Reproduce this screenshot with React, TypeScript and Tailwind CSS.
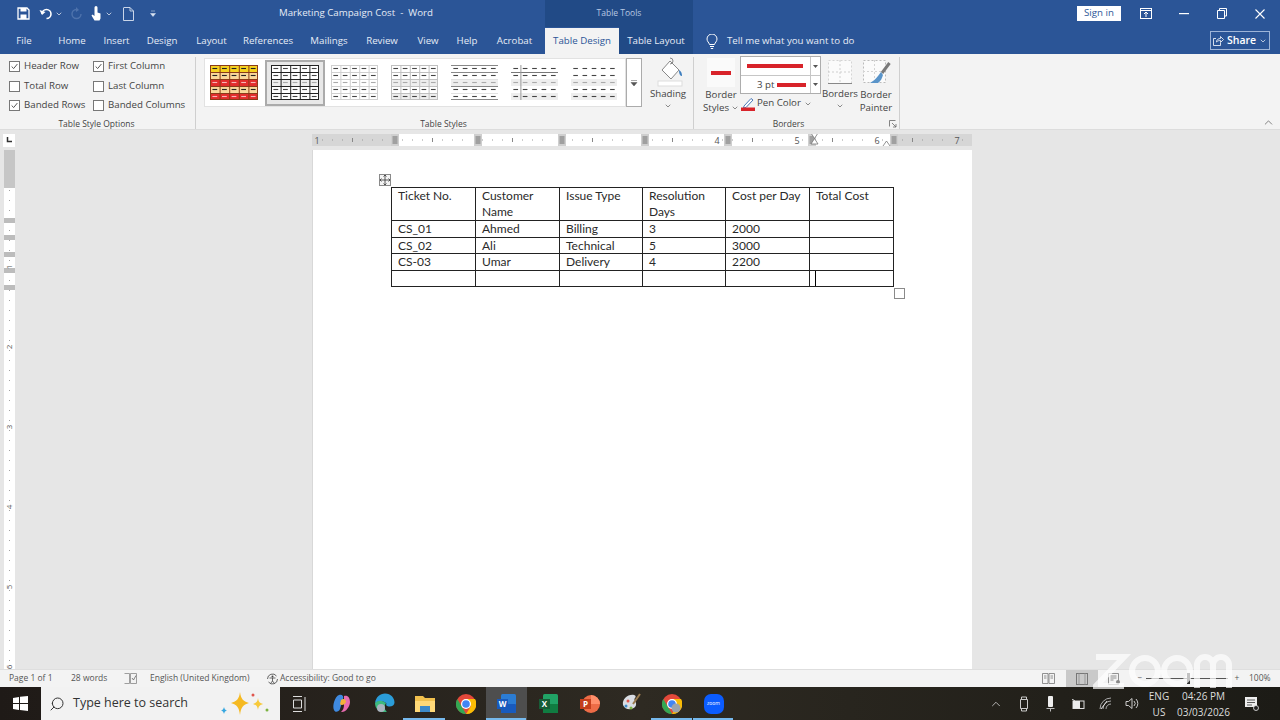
import React from "react";
import { ChevronDown, ChevronUp, Search } from "lucide-react";

const Chev = ({ c = "text-[#555]" }: { c?: string }) => <ChevronDown className={`w-[8px] h-[8px] ${c}`} strokeWidth={2} />;

const tabs: [string, string][] = [
  ["File", "w-[48px]"], ["Home", "w-[48px]"], ["Insert", "w-[41px]"], ["Design", "w-[50px]"], ["Layout", "w-[49px]"],
  ["References", "w-[64px]"], ["Mailings", "w-[58px]"], ["Review", "w-[48px]"], ["View", "w-[44px]"], ["Help", "w-[34px]"], ["Acrobat", "w-[61px]"],
];

function Check({ label, on, w }: { label: string; on?: boolean; w: string }) {
  return (
    <div className={`flex items-center gap-[4px] h-[19.5px] ${w}`}>
      <span className="w-[11px] h-[11px] border border-[#777] bg-white flex items-center justify-center shrink-0">
        {on && (
          <svg viewBox="0 0 11 11" className="w-[9px] h-[9px]"><path d="M2 5.5 L4.5 8 L9 2.5" fill="none" stroke="#444" strokeWidth="1.1" /></svg>
        )}
      </span>
      <span className="whitespace-nowrap">{label}</span>
    </div>
  );
}

function Thumb({ kind, w }: { kind: "color" | "grid" | "light" | "mid" | "lines" | "firstcol" | "plain"; w: number }) {
  const rows = [0, 1, 2, 3, 4];
  const cols = [0, 1, 2, 3, 4];
  const h = 35;
  const cw = w / 5;
  const ch = h / 5;
  const stroke = kind === "grid" ? "#222" : kind === "light" ? "#d0d0d0" : kind === "mid" ? "#c0c0c0" : "#999";
  const dash = kind === "color" ? "#222" : "#444";
  return (
    <svg width={w} height={h} viewBox={`0 0 ${w} ${h}`} className="shrink-0 block">
      <rect x="0" y="0" width={w} height={h} fill="#fff" />
      {kind === "color" && rows.map((r) => (
        <rect key={r} x="0" y={r * ch} width={w} height={ch} fill={["#f6d21f", "#f9d79a", "#e22d2d", "#f9d79a", "#e22d2d"][r]} />
      ))}
      {(kind === "grid" || kind === "mid" || kind === "plain" || kind === "lines" || kind === "firstcol") && <rect x="0" y={ch * 2} width={w} height={ch} fill="#eeeeee" />}
      {(kind === "mid" || kind === "plain" || kind === "firstcol") && <rect x="0" y={ch * 4} width={w} height={ch} fill="#eeeeee" />}
      {(kind === "color" || kind === "grid" || kind === "light" || kind === "mid") && (
        <>
          {rows.concat(5).map((r) => <line key={r} x1="0" x2={w} y1={r * ch + (r === 5 ? -0.5 : 0.5)} y2={r * ch + (r === 5 ? -0.5 : 0.5)} stroke={kind === "color" ? "#8a3b1a" : stroke} strokeWidth="1" />)}
          {cols.concat(5).map((c) => <line key={c} y1="0" y2={h} x1={c * cw + (c === 5 ? -0.5 : 0.5)} x2={c * cw + (c === 5 ? -0.5 : 0.5)} stroke={kind === "color" ? "#8a3b1a" : stroke} strokeWidth="1" />)}
        </>
      )}
      {kind === "lines" && [0.5, 7.5, 21.5, 34.5, 14.5, 28.5].map((y, i) => <line key={i} x1="0" x2={w} y1={y} y2={y} stroke={i < 4 ? "#888" : "#e2e2e2"} />)}
      {kind === "firstcol" && (
        <>
          <line x1="0" x2={w} y1="7.5" y2="7.5" stroke="#777" />
          <line x1={cw + 0.5} x2={cw + 0.5} y1="0" y2={h} stroke="#999" />
        </>
      )}
      {rows.map((r) => cols.map((c) => (
        <line key={`${r}-${c}`} x1={c * cw + cw * 0.25} x2={c * cw + cw * 0.75} y1={r * ch + ch / 2} y2={r * ch + ch / 2}
          stroke={kind === "color" ? (r === 2 || r === 4 ? "#f7b5b5" : dash) : r === 2 ? "#aaa" : dash} strokeWidth="1.1" />
      )))}
    </svg>
  );
}

function HRuler() {
  const w = 660;
  const ticks: React.ReactNode[] = [];
  for (let x = 0; x <= 660; x += 10) {
    const inch = (x - 80) % 80 === 0;
    const mid = (x - 80 + 40) % 80 === 0;
    if (inch) continue;
    ticks.push(mid
      ? <line key={x} x1={x + 0.5} x2={x + 0.5} y1="4" y2="8" stroke="#888" />
      : <rect key={x} x={x} y="5.5" width="1" height="1" fill="#999" />);
  }
  return (
    <svg width={w} height="12" viewBox="0 0 660 12" className="block">
      <rect x="0" y="0" width="660" height="12" fill="#d6d6d6" />
      <rect x="80" y="0" width="500" height="12" fill="#fff" />
      {ticks}
      {[79, 162, 246, 329, 412, 496, 578].map((x) => (
        <g key={x}>
          <rect x={x} y="0" width="8" height="12" fill="#cfcfcf" />
          <rect x={x + 1.5} y="2" width="5" height="8" fill="#a0a0a0" />
        </g>
      ))}
      {[["1", 5], ["4", 405], ["5", 485], ["6", 565], ["7", 645]].map(([t, x]) => (
        <text key={t as string} x={x as number} y="9.5" fontSize="9" fontFamily="Open Sans, sans-serif" fill="#555" textAnchor="middle">{t}</text>
      ))}
      <path d="M499 -1 h7 l-3.5 5.5 l3.5 5.5 h-7 l3.5 -5.5 z" fill="#fff" stroke="#777" strokeWidth=".8" />
      <path d="M571 12 l3.5 -5 l3.5 5 v2 h-7 z" fill="#fff" stroke="#777" strokeWidth=".8" />
    </svg>
  );
}

function VRuler() {
  const marks: React.ReactNode[] = [];
  for (let y = 0; y < 520; y += 10) {
    const rel = y - 38;
    if (rel < 0 && y > 36) continue;
    marks.push(rel % 40 === 0 && rel % 80 !== 0
      ? <line key={y} x1="3.5" x2="8" y1={y + 0.5} y2={y + 0.5} stroke="#888" />
      : <rect key={y} x="5.5" y={y} width="1" height="1" fill="#999" />);
  }
  return (
    <svg width="11" height="519" viewBox="0 0 12 519" preserveAspectRatio="none" className="block ml-[4px]">
      <rect width="12" height="519" fill="#fff" />
      {marks}
      <rect width="12" height="38" fill="#c6c6c6" />
      {[68, 85, 102, 118, 135].map((y) => <rect key={y} x="0" y={y} width="12" height="5" fill="#bcbcbc" />)}
      {[["1", 117], ["2", 197], ["3", 277], ["4", 357], ["5", 437], ["6", 517]].map(([t, y]) => (
        <text key={t as string} x="6" y={y as number} fontSize="8" fontFamily="Open Sans, sans-serif" fill="#555" textAnchor="middle" transform={`rotate(-90 6 ${y})`} dy="3">{t}</text>
      ))}
    </svg>
  );
}

const rowsData = [
  ["CS_01", "Ahmed", "Billing", "3", "2000", ""],
  ["CS_02", "Ali", "Technical", "5", "3000", ""],
  ["CS-03", "Umar", "Delivery", "4", "2200", ""],
];
const th = "border border-[#222] align-top pl-[6px] pt-0 leading-[16px] font-normal text-left";
const td = "border border-[#222] align-top pl-[6px] p-0 h-[16.6px] leading-[15.6px] font-normal text-left";

function TaskIcon({ children, w = "w-[41px]", active, under }: { children: React.ReactNode; w?: string; active?: boolean; under?: boolean }) {
  return (
    <div className={`relative h-full flex items-center justify-center ${w} ${active ? "bg-[#4e4e4e]" : ""}`}>
      {children}
      {under && <span className="absolute bottom-0 left-0 right-[1px] h-[2px] bg-[#76b9ed]" />}
    </div>
  );
}

const GroupLabel = ({ t, c = "" }: { t: string; c?: string }) => (
  <div className={`mt-auto h-[13px] leading-[15px] text-center text-[8.5px] ${c}`}>{t}</div>
);

export default function App() {
  return (
    <div className="relative w-[1280px] h-[720px] overflow-hidden flex flex-col bg-[#e6e6e6] text-[9.7px] text-[#444]" style={{ fontFamily: '"Open Sans", "Noto Sans", sans-serif' }}>
      {/* Title bar */}
      <div className="h-[27px] bg-[#2b5597] flex items-center text-white shrink-0">
        <div className="w-[545px] flex items-center h-full">
          <div className="flex items-center ml-[17px]">
            <svg width="13" height="13" viewBox="0 0 13 13"><path d="M1 1h9l2 2v9H1z" fill="none" stroke="#fff" strokeWidth="1.3" /><rect x="3.5" y="1" width="6" height="3.5" fill="#fff" /><rect x="3.5" y="7.5" width="6" height="4.5" fill="#fff" /></svg>
            <svg width="14" height="13" viewBox="0 0 14 13" className="ml-[9px]"><path d="M3 7 A4.5 4.5 0 1 1 7.5 11.5" fill="none" stroke="#fff" strokeWidth="1.6" /><path d="M0.5 3 L3 8 L6.5 5" fill="#fff" /></svg>
            <span className="ml-[2px]"><Chev c="text-white" /></span>
            <svg width="12" height="13" viewBox="0 0 12 13" className="ml-[8px] opacity-30"><path d="M10 7 A4.5 4.5 0 1 1 5.5 2.5" fill="none" stroke="#9fb7dd" strokeWidth="1.4" /><path d="M5 0 L8 3 L5 5 z" fill="#9fb7dd" /></svg>
            <svg width="12" height="16" viewBox="0 0 12 16" className="ml-[7px]"><path d="M4.5 1.5 a1.5 1.5 0 0 1 3 0 v5 l3 1 v5 l-1 2 h-5 l-3 -5 1 -1 2 1.5 z" fill="#fff" /></svg>
            <span className="ml-[3px]"><Chev c="text-white" /></span>
            <svg width="11" height="14" viewBox="0 0 11 14" className="ml-[10px]"><path d="M1 .5h6l3.5 3.5v9.500H.5V.5" fill="none" stroke="#dbe4f2" strokeWidth=".9" /><path d="M7 .5v3.500h3.500" fill="none" stroke="#dbe4f2" strokeWidth=".8" /></svg>
            <svg width="6" height="7" viewBox="0 0 6 7" className="ml-[16px]"><path d="M1 1h4M.5 3.500h5L3 6.500z" fill="#dbe4f2" stroke="#dbe4f2" strokeWidth=".5" /></svg>
          </div>
          <span className="ml-[123px] text-[#e6ecf6] whitespace-nowrap">Marketing Campaign Cost&nbsp; -&nbsp; Word</span>
        </div>
        <div className="w-[148px] h-full bg-[#214a86] flex items-center justify-center text-[8.5px] text-[#b8c8e2]">Table Tools</div>
        <div className="ml-[384px] w-[44px] h-[15px] bg-white text-[#2b5597] flex items-center justify-center">Sign in</div>
        <svg width="12" height="11" viewBox="0 0 12 11" className="ml-[19px]"><rect x=".5" y=".5" width="11" height="10" fill="none" stroke="#fff" /><path d="M.5 2.500h11M6 9V4.500M4 6l2-2 2 2" fill="none" stroke="#fff" /></svg>
        <svg width="10" height="2" viewBox="0 0 10 2" className="ml-[27px]"><rect width="10" height="1.200" fill="#fff" /></svg>
        <svg width="10" height="11" viewBox="0 0 10 11" className="ml-[28px]"><path d="M2.500 2V.5h7v7.500H8M.5 2.500h7v8h-7z" fill="none" stroke="#fff" /></svg>
        <svg width="10" height="10" viewBox="0 0 10 10" className="ml-[28px]"><path d="M.5 .5l9 9M9.500 .5l-9 9" stroke="#fff" strokeWidth="1.100" /></svg>
      </div>

      {/* Tabs */}
      <div className="h-[27px] bg-[#2b5597] flex items-stretch text-[#e6ecf6] shrink-0">
        {tabs.map(([t, w]) => (
          <div key={t} className={`${w} flex items-center justify-center whitespace-nowrap pt-[1px]`}>{t}</div>
        ))}
        <div className="w-[74px] bg-[#f3f3f3] text-[#2b5597] flex items-center justify-center mt-[1px] whitespace-nowrap">Table Design</div>
        <div className="w-[74px] bg-[#214a86] flex items-center justify-center whitespace-nowrap pt-[1px]">Table Layout</div>
        <div className="w-[517px] flex items-center pl-[13px] pt-[1px]">
          <svg width="12" height="15" viewBox="0 0 12 15"><path d="M3.500 10.500C3 8.500 1 7.500 1 5a5 5 0 0 1 10 0c0 2.500-2 3.500-2.500 5.500zM4 12.500h4M4.800 14.500h2.400" fill="none" stroke="#fff" strokeWidth="1" /></svg>
          <span className="ml-[9px] whitespace-nowrap">Tell me what you want to do</span>
        </div>
        <div className="mt-[4px] h-[19px] w-[60px] border border-[#9db4d8] flex items-center justify-center gap-[3px] text-white">
          <svg width="11" height="11" viewBox="0 0 11 11"><path d="M3 3.500H.5v7h7V8M3.500 7c0-2.500 2-3.500 4-3.500V1.500l3 3-3 3v-2c-1.500 0-3 .3-4 1.500z" fill="none" stroke="#fff" strokeWidth=".8" /></svg>
          <span className="font-semibold text-[10.5px]">Share</span>
          <Chev c="text-white" />
        </div>
      </div>

      {/* Ribbon */}
      <div className="h-[76px] bg-[#f3f3f3] border-b border-[#dcdcdc] flex items-start shrink-0 relative">
        {/* Table Style Options */}
        <div className="w-[196px] h-[72px] mt-[3px] border-r border-[#cfcfcf] flex flex-col">
          <div className="flex pl-[9px]">
            <div className="flex flex-col w-[84px]">
              <Check label="Header Row" on w="w-[84px]" />
              <Check label="Total Row" w="w-[84px]" />
              <Check label="Banded Rows" on w="w-[84px]" />
            </div>
            <div className="flex flex-col">
              <Check label="First Column" on w="w-[95px]" />
              <Check label="Last Column" w="w-[95px]" />
              <Check label="Banded Columns" w="w-[95px]" />
            </div>
          </div>
          <GroupLabel t="Table Style Options" c="pr-[2px]" />
        </div>
        {/* Table styles */}
        <div className="w-[498px] h-[72px] mt-[3px] border-r border-[#cfcfcf] flex flex-col relative">
          <div className="flex items-stretch ml-[8px] mt-[1px] h-[49px]">
            <div className="w-[422px] bg-white border border-[#e2e2e2] flex items-center relative">
              <span className="ml-[5px]"><Thumb kind="color" w={48} /></span>
              <span className="ml-[7px] w-[60px] h-[46px] border-2 border-[#ababab] bg-[#e8e8e8] flex items-center justify-center">
                <Thumb kind="grid" w={48} />
              </span>
              <span className="ml-[6px]"><Thumb kind="light" w={47} /></span>
              <span className="ml-[13px]"><Thumb kind="mid" w={47} /></span>
              <span className="ml-[13px]"><Thumb kind="lines" w={47} /></span>
              <span className="ml-[13px]"><Thumb kind="firstcol" w={47} /></span>
              <span className="ml-[13px]"><Thumb kind="plain" w={46} /></span>
            </div>
            <div className="w-[16px] bg-white border border-[#ababab] flex items-center justify-center">
              <svg width="8" height="8" viewBox="0 0 8 8"><path d="M1 1.500h6M1 3.500h6L4 7z" fill="#555" stroke="#555" strokeWidth=".5" /></svg>
            </div>
          </div>
          <div className="absolute left-[454px] top-0 w-[36px] flex flex-col items-center">
            <svg width="30" height="30" viewBox="0 0 30 30">
              <path d="M9 13 L17 4 L26 13 L18 22 z" fill="#fff" stroke="#888" />
              <path d="M17 1 a2 2 0 0 1 0 6" fill="none" stroke="#888" />
              <path d="M26 13 c2 1 3 3 3 6 c-2 0 -3 -2 -3 -6" fill="#3f7fbf" />
              <rect x="5" y="24" width="24" height="5" fill="#fff" stroke="#ddd" />
            </svg>
            <div className="text-center leading-[12px] mt-[1px]">Shading</div>
            <div className="flex justify-center mt-[2px]"><Chev /></div>
          </div>
          <GroupLabel t="Table Styles" c="pr-[2px]" />
        </div>
        {/* Borders */}
        <div className="w-[206px] h-[72px] mt-[3px] border-r border-[#cfcfcf] flex flex-col relative">
          <div className="flex h-[59px]">
            <div className="ml-[12px] w-[30px] flex flex-col items-center">
              <div className="w-[28px] h-[29px] mt-[1px] bg-[#fafafa] flex items-center justify-center">
                <span className="w-[20px] h-[4px] bg-[#d8232a]" />
              </div>
              <div className="mt-[1px] leading-[13px] text-center whitespace-nowrap">Border<br /><span className="inline-flex items-center gap-[2px]">Styles <Chev /></span></div>
            </div>
            <div className="ml-[4px] w-[81px] flex flex-col">
              <div className="w-[81px] h-[38px] border border-[#adadad] bg-white flex flex-col -mt-[1px]">
                <div className="h-[19px] border-b border-[#c6c6c6] flex">
                  <div className="flex-1 flex items-center pl-[6px]"><span className="w-[56px] h-[4px] bg-[#d8232a]" /></div>
                  <div className="w-[10px] border-l border-[#c6c6c6] flex items-center justify-center"><svg width="5" height="3"><path d="M0 0h5L2.500 3z" fill="#555" /></svg></div>
                </div>
                <div className="flex-1 flex">
                  <div className="flex-1 flex items-center pl-[16px] gap-[3px]"><span className="leading-none whitespace-nowrap">3 pt</span><span className="w-[29px] h-[4px] bg-[#d8232a]" /></div>
                  <div className="w-[10px] border-l border-[#c6c6c6] flex items-center justify-center"><svg width="5" height="3"><path d="M0 0h5L2.500 3z" fill="#555" /></svg></div>
                </div>
              </div>
              <div className="flex items-center mt-[2px] ml-[1px] h-[15px] whitespace-nowrap">
                <svg width="14" height="14" viewBox="0 0 14 14"><path d="M3 9 L10 1.500 L12 3 L5 10.500 L2.500 11z" fill="#fff" stroke="#4a79b8" /><rect x="0" y="10.500" width="14" height="3.500" fill="#d8232a" /></svg>
                <span className="ml-[2px]">Pen Color</span>
                <span className="ml-[3px]"><Chev /></span>
              </div>
            </div>
            <div className="w-[36px] ml-[1px] flex flex-col items-center">
              <svg width="24" height="24" viewBox="0 0 24 24" className="mt-[3px]">
                <rect x=".5" y=".5" width="23" height="23" fill="#fbfbfb" stroke="#d4d4d4" strokeDasharray="2 2" />
                <path d="M12 0v24M0 12h24" stroke="#cfcfcf" strokeDasharray="2 2" />
                <path d="M0 23.500h24" stroke="#888" />
              </svg>
              <div className="mt-[3px] leading-[13px]">Borders</div>
              <div className="mt-[2px]"><Chev /></div>
            </div>
            <div className="w-[36px] flex flex-col items-center">
              <svg width="30" height="30" viewBox="0 0 30 30" className="mt-[2px] -mb-[1px]">
                <rect x="2.500" y="1.500" width="22" height="22" fill="#fbfbfb" stroke="#bbb" strokeDasharray="2 2" />
                <path d="M13.500 1v23M2 12.500h23" stroke="#d4d4d4" strokeDasharray="2 2" />
                <path d="M28.500 4 L21 14" stroke="#7a7a7a" strokeWidth="3" />
                <path d="M20 13 L17 17 C15 20 12 22 9 24 L17 24 C20 22 21 19 22 16z" fill="#5a94c9" />
              </svg>
              <div className="leading-[13px] text-center">Border<br />Painter</div>
            </div>
          </div>
          <GroupLabel t="Borders" c="pr-[16px]" />
          <svg width="8" height="8" viewBox="0 0 8 8" className="absolute right-[2px] bottom-[1px]"><path d="M.5 .5h6M.5 .5v6M3 3l4 4M7 4v3H4" fill="none" stroke="#666" strokeWidth=".8" /></svg>
        </div>
        <ChevronUp className="absolute right-[5px] bottom-0 w-[13px] h-[13px] text-[#555]" strokeWidth={1.3} />
      </div>

      {/* Ruler row */}
      <div className="h-[20px] flex items-center shrink-0">
        <div className="ml-[3px] w-[12px] h-[13px] bg-white flex items-center justify-center">
          <svg width="6" height="6" viewBox="0 0 6 6"><path d="M1.500 0v4.500H6" fill="none" stroke="#333" strokeWidth="1.500" /></svg>
        </div>
        <div className="ml-[297px]"><HRuler /></div>
      </div>

      {/* Document */}
      <div className="h-[519px] flex shrink-0 overflow-hidden">
        <div className="w-[312px] shrink-0"><VRuler /></div>
        <div className="w-[660px] bg-white h-[519px] pl-[78px] pt-[37px] relative border-l border-[#d8d8d8]">
          <table className="border-collapse table-fixed w-[502px] text-[#2a2a2a] text-[12px]" style={{ fontFamily: 'Lato, "Open Sans", sans-serif' }}>
            <colgroup>
              <col className="w-[84px]" /><col className="w-[84px]" /><col className="w-[83px]" /><col className="w-[83px]" /><col className="w-[84px]" /><col className="w-[84px]" />
            </colgroup>
            <tbody>
              <tr>
                <td className={th}>Ticket No.</td>
                <td className={th}>Customer<br />Name</td>
                <td className={th}>Issue Type</td>
                <td className={th}>Resolution<br />Days</td>
                <td className={th}>Cost per Day</td>
                <td className={th}>Total Cost</td>
              </tr>
              {rowsData.map((r) => (
                <tr key={r[0]}>
                  {r.map((c, i) => <td key={i} className={td}>{c}</td>)}
                </tr>
              ))}
              <tr>
                {[0, 1, 2, 3, 4].map((i) => <td key={i} className={td}>&nbsp;</td>)}
                <td className={td}><span className="inline-block w-[1px] h-[15px] bg-black align-top -ml-[1px]" /></td>
              </tr>
            </tbody>
          </table>
          {/* table handles */}
          <div className="absolute left-[66px] top-[24px] w-[12px] h-[12px] border border-[#8a8a8a] bg-[#f4f4f4] flex items-center justify-center">
            <svg width="10" height="10" viewBox="0 0 10 10"><path d="M5 0v10M0 5h10M3.500 1.500L5 0l1.500 1.500M3.500 8.500L5 10l1.500-1.500M1.500 3.500L0 5l1.500 1.500M8.500 3.500L10 5 8.500 6.500" fill="none" stroke="#333" strokeWidth=".8" /></svg>
          </div>
          <div className="absolute left-[581px] top-[138px] w-[11px] h-[11px] border border-[#8a8a8a] bg-white" />
        </div>
      </div>

      {/* Status bar */}
      <div className="h-[18px] bg-[#f3f3f3] border-t border-[#dedede] flex items-center text-[8.5px] text-[#555] shrink-0 whitespace-nowrap">
        <span className="ml-[9px] w-[62px]">Page 1 of 1</span>
        <span className="w-[53px]">28 words</span>
        <svg width="13" height="11" viewBox="0 0 13 11"><path d="M.5 .5h5v10h-5M6.500 .5h6v10h-6z" fill="none" stroke="#888" strokeWidth=".8" /><path d="M8 5l1.500 2L12 2.500" fill="none" stroke="#666" strokeWidth=".8" /></svg>
        <span className="ml-[13px] w-[116px]">English (United Kingdom)</span>
        <svg width="13" height="12" viewBox="0 0 13 12"><path d="M1.500 6a5 5 0 0 1 9-3M11.500 6a5 5 0 0 1-9 3" fill="none" stroke="#666" /><circle cx="6.500" cy="3.500" r="1" fill="#444" /><path d="M3.500 5h6M6.500 5v3l-2 2.500M6.500 8l2 2.500" fill="none" stroke="#444" strokeWidth=".8" /></svg>
        <span className="ml-[1px]">Accessibility: Good to go</span>
        <div className="ml-auto flex items-center h-full">
          <svg width="13" height="11" viewBox="0 0 13 11"><path d="M.5 .5h5.500v10H.5zM7 .5h5.500v10H7zM2 3h2.500M2 5h2.500M8.500 3H11M8.500 5H11" fill="none" stroke="#777" strokeWidth=".8" /></svg>
          <div className="ml-[11px] w-[32px] h-full bg-[#c9c9c9] flex items-center justify-center">
            <svg width="12" height="12" viewBox="0 0 12 12"><rect x=".5" y=".5" width="11" height="11" fill="none" stroke="#777" /><path d="M3 .5v11M9 .5v11" stroke="#999" /></svg>
          </div>
          <svg width="13" height="12" viewBox="0 0 13 12" className="ml-[10px]"><path d="M.5 .5h10v11h-10zM2.500 3h6M2.500 5h6M2.500 7h3" fill="none" stroke="#777" strokeWidth=".8" /><circle cx="10" cy="9" r="2" fill="#888" /></svg>
          <span className="ml-[15px] w-[8px] text-center">−</span>
          <div className="relative w-[82px] h-[1px] bg-[#555] ml-[2px]">
            <span className="absolute left-[41px] top-[-5px] w-[3px] h-[11px] bg-[#333]" />
          </div>
          <span className="ml-[5px] w-[8px] text-center">+</span>
          <span className="ml-[8px] mr-[9px] w-[22px]">100%</span>
        </div>
      </div>

      {/* Taskbar */}
      <div className="h-[33px] bg-gradient-to-r from-[#1f1a17] via-[#2e2a22] to-[#1c1b16] flex items-stretch text-white shrink-0">
        <div className="w-[41px] flex items-center justify-center">
          <svg width="15" height="15" viewBox="0 0 15 15" fill="#fff"><path d="M0 2l6-1v6H0zM7 .8L15 0v7H7zM0 8h6v6l-6-1zM7 8h8v7l-8-1z" /></svg>
        </div>
        <div className="w-[239px] bg-[#f2f2f2] text-[#333] flex items-center relative">
          <Search className="ml-[8px] w-[16px] h-[16px] -scale-x-100" strokeWidth={1.5} />
          <span className="ml-[8px] text-[12.5px]">Type here to search</span>
          <svg width="52" height="28" viewBox="0 0 52 28" className="absolute left-[179px] top-[3px]">
            <path d="M20 2 C21 9 23 11 29 13 C23 15 21 17 20 25 C19 17 17 15 11 13 C17 11 19 9 20 2z" fill="#f5b921" />
            <path d="M38 8 C38.500 12 40 13 43 14 C40 15 38.500 16 38 20 C37.500 16 36 15 33 14 C36 13 37.500 12 38 8z" fill="#f7c93a" />
            <path d="M4 17 C4.500 19 5 20 7 20.500 C5 21 4.500 22 4 24 C3.500 22 3 21 1 20.500 C3 20 3.500 19 4 17z" fill="#36a7e0" />
            <circle cx="33" cy="5" r="1.500" fill="#e0554d" /><circle cx="47" cy="20" r="1.500" fill="#7cb342" />
          </svg>
        </div>
        <TaskIcon w="w-[39px]">
          <svg width="15" height="16" viewBox="0 0 15 16"><path d="M1 .5h9M1 15.500h9M1.500 4h8v8h-8zM13 1v14" fill="none" stroke="#ddd" strokeWidth="1" /></svg>
        </TaskIcon>
        <TaskIcon w="w-[46px]">
          <svg width="20" height="20" viewBox="0 0 20 20"><path d="M7 1c3-1 5 1 4 4L8 15c-1 3-5 4-6 1C0 12 3 2 7 1z" fill="#3f8ae0" /><path d="M12 2c4-1 6 2 6 6 0 5-5 11-9 10 2-2 3-4 3-7z" fill="#e86bb0" /><path d="M9 6c2-2 5-1 5 2-1 3-5 4-6 2z" fill="#f3b13a" /></svg>
        </TaskIcon>
        <TaskIcon w="w-[38px]">
          <svg width="21" height="21" viewBox="0 0 21 21"><path d="M1 10C2 4 6 .5 11 .5c6 0 9.500 4.500 9.500 9 0 3-3 4.500-6 4-2-.5-3-1.500-2-3-3-3-8-3-11.500-.5z" fill="#2b9dd9" /><path d="M1 10c3-3 8-3 11 .5-2 2-2 6 1 8-5 2-12-1-12-8.500z" fill="#3dba7f" /><circle cx="7" cy="15" r="4" fill="#aab4bf" /></svg>
        </TaskIcon>
        <TaskIcon w="w-[43px]" under>
          <svg width="20" height="18" viewBox="0 0 20 18"><path d="M0 1h8l2 2h10v14H0z" fill="#f2c14e" /><rect x="0" y="6" width="20" height="11" fill="#ffd978" /><rect x="5" y="11" width="10" height="6" fill="#3d8ac9" /></svg>
        </TaskIcon>
        <TaskIcon w="w-[40px]">
          <svg width="20" height="20" viewBox="0 0 20 20"><circle cx="10" cy="10" r="10" fill="#e3483a" /><path d="M10 20a10 10 0 0 1-8.700-15l5 8.500z" fill="#34a853" /><path d="M10 5h9a10 10 0 0 1-9 15l5-8z" fill="#fbbc05" /><circle cx="10" cy="10" r="5" fill="#fff" /><circle cx="10" cy="10" r="3.800" fill="#4285f4" /></svg>
        </TaskIcon>
        <TaskIcon active under>
          <svg width="19" height="19" viewBox="0 0 19 19"><rect x="4" y="0" width="15" height="19" rx="1.500" fill="#2b7cd3" /><rect x="4" y="10" width="15" height="9" rx="1" fill="#185abd" /><rect x="0" y="5" width="11" height="10" fill="#185abd" /><text x="5.500" y="13" fontSize="8" fontWeight="700" fill="#fff" textAnchor="middle" fontFamily="Open Sans">W</text></svg>
        </TaskIcon>
        <TaskIcon w="w-[42px]">
          <svg width="19" height="19" viewBox="0 0 19 19"><rect x="4" y="0" width="15" height="19" rx="1.500" fill="#21a366" /><rect x="4" y="10" width="15" height="9" fill="#107c41" /><rect x="0" y="5" width="11" height="10" fill="#185c37" /><text x="5.500" y="13" fontSize="8" fontWeight="700" fill="#fff" textAnchor="middle" fontFamily="Open Sans">X</text></svg>
        </TaskIcon>
        <TaskIcon>
          <svg width="20" height="20" viewBox="0 0 20 20"><circle cx="11" cy="10" r="9" fill="#ed6c47" /><path d="M11 1a9 9 0 0 1 9 9h-9z" fill="#ff8f6b" /><rect x="0" y="5" width="11" height="10" fill="#c43e1c" /><text x="5.500" y="13" fontSize="8" fontWeight="700" fill="#fff" textAnchor="middle" fontFamily="Open Sans">P</text></svg>
        </TaskIcon>
        <TaskIcon w="w-[41px]">
          <svg width="20" height="21" viewBox="0 0 20 21"><path d="M2 12C1 6 7 1 13 2c2 .5 2 2 1 3-2 2 2 4 1 7-1 5-11 6-13 0z" fill="#d9dde3" /><circle cx="7" cy="8" r="1.500" fill="#e0554d" /><circle cx="5" cy="13" r="1.500" fill="#3d8ac9" /><circle cx="10" cy="15" r="1.500" fill="#7cb342" /><path d="M19 1L12 11" stroke="#9a7b4f" strokeWidth="2" /></svg>
        </TaskIcon>
        <TaskIcon w="w-[42px]" under>
          <svg width="20" height="20" viewBox="0 0 20 20"><circle cx="10" cy="10" r="10" fill="#e3483a" /><path d="M10 20a10 10 0 0 1-8.700-15l5 8.500z" fill="#34a853" /><path d="M10 5h9a10 10 0 0 1-9 15l5-8z" fill="#fbbc05" /><circle cx="10" cy="10" r="5" fill="#fff" /><circle cx="10" cy="10" r="3.800" fill="#4285f4" /><circle cx="14" cy="14" r="4.500" fill="#9aa3ad" /></svg>
        </TaskIcon>
        <TaskIcon under>
          <div className="w-[20px] h-[20px] rounded-[7px] bg-[#0b5cff] flex items-center justify-center text-[5px] text-white leading-none">zoom</div>
        </TaskIcon>
        <div className="ml-auto flex items-center h-full text-[#ddd]">
          <ChevronUp className="w-[14px] h-[14px]" strokeWidth={1.3} />
          <svg width="10" height="16" viewBox="0 0 10 16" className="ml-[16px]"><path d="M2.500 3V1h5v2M1.500 3.500h7v9h-7zM2.500 13v2h5v-2" fill="none" stroke="#ddd" strokeWidth=".9" /></svg>
          <svg width="9" height="16" viewBox="0 0 9 16" className="ml-[17px]"><rect x="2" y="0" width="5" height="11" rx="1" fill="#eee" /><path d="M.5 12.500h8M4.500 12.500v3" stroke="#bbb" /></svg>
          <svg width="13" height="10" viewBox="0 0 13 10" className="ml-[17px]"><rect x="1" y="2" width="11" height="7.500" fill="none" stroke="#ddd" /><rect x="1" y="2" width="7" height="7.500" fill="#eee" /><path d="M0 0l3 2" stroke="#ddd" /></svg>
          <svg width="13" height="13" viewBox="0 0 13 13" className="ml-[14px]"><path d="M1 12A11 11 0 0 1 12 1M4 12a8 8 0 0 1 8-8M7 12a5 5 0 0 1 5-5" fill="none" stroke="#aaa" /><path d="M2 12L8 4" stroke="#ddd" /></svg>
          <svg width="14" height="13" viewBox="0 0 14 13" className="ml-[13px]"><path d="M1 4.500h2.500L7 1.500v10l-3.500-3H1z" fill="none" stroke="#ccc" /><path d="M9 4a3.500 3.500 0 0 1 0 5M11 2a6.500 6.500 0 0 1 0 9" fill="none" stroke="#ccc" /></svg>
          <div className="ml-[8px] w-[24px] text-center leading-[16px] text-[10px]">ENG<br />US</div>
          <div className="ml-[4px] w-[57px] text-center leading-[16px] text-[10px]">04:26 PM<br />03/03/2026</div>
          <svg width="15" height="15" viewBox="0 0 15 15" className="ml-[12px] mr-[21px]"><path d="M1 1h12v10H1z" fill="#eee" /><path d="M3 4h8M3 6.500h8M3 9h5" stroke="#333" strokeWidth=".8" /><circle cx="12" cy="12" r="2.500" fill="#222" stroke="#eee" strokeWidth=".8" /></svg>
        </div>
      </div>

      {/* Zoom watermark */}
      <svg width="140" height="44" viewBox="0 0 140 44" className="absolute left-[1093px] top-[648px] opacity-70 pointer-events-none">
        <g fill="none" stroke="#fff" strokeWidth="6">
          <path d="M3 9h28L3 38h28" />
          <circle cx="52" cy="23" r="13" />
          <circle cx="84" cy="23" r="13" />
          <path d="M104 40V17a8 8 0 0 1 16 0v23M120 17a8 8 0 0 1 16 0v23" />
        </g>
      </svg>
    </div>
  );
}
